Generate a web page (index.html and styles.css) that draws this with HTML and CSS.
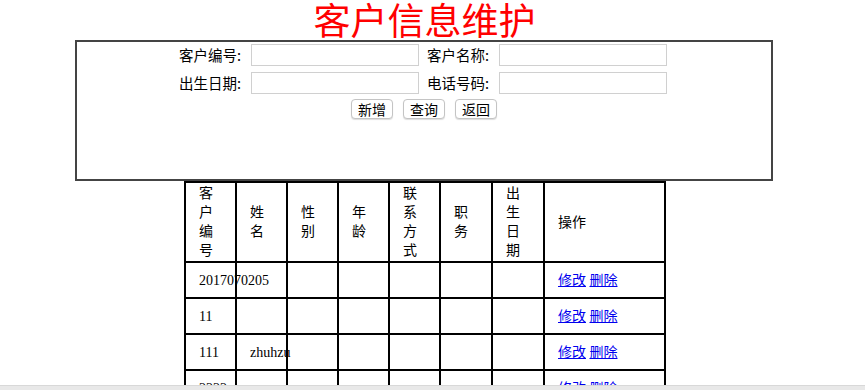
FILE: index.html
```html
<!DOCTYPE html>
<html lang="zh-CN">

<head>
    <meta charset="UTF-8">
    <title>客户信息维护</title>
    <link rel="stylesheet" href="styles.css">
</head>

<body>
    <div class="page">
        <h1 class="title">客户信息维护</h1>
        <div class="search">
            <div class="form">
                <label class="lab">客户编号:</label>
                <input class="txt" type="text">
                <label class="lab lab2">客户名称:</label>
                <input class="txt" type="text">
                <label class="lab">出生日期:</label>
                <input class="txt" type="text">
                <label class="lab lab2">电话号码:</label>
                <input class="txt" type="text">
            </div>
            <div class="btns">
                <button class="btn">新增</button>
                <button class="btn">查询</button>
                <button class="btn">返回</button>
            </div>
        </div>
        <table class="list">
            <colgroup>
                <col class="c1"><col class="c1"><col class="c1"><col class="c1"><col class="c1">
                <col class="c2"><col class="c2"><col class="c3">
            </colgroup>
            <tr class="head">
                <td>客户编号</td>
                <td>姓名</td>
                <td>性别</td>
                <td>年龄</td>
                <td>联系方式</td>
                <td>职务</td>
                <td>出生日期</td>
                <td>操作</td>
            </tr>
            <tr>
                <td>2017070205</td>
                <td></td>
                <td></td><td></td><td></td><td></td><td></td>
                <td><a href="#">修改</a> <a href="#">删除</a></td>
            </tr>
            <tr>
                <td>11</td>
                <td></td>
                <td></td><td></td><td></td><td></td><td></td>
                <td><a href="#">修改</a> <a href="#">删除</a></td>
            </tr>
            <tr>
                <td>111</td>
                <td>zhuhzu</td>
                <td></td><td></td><td></td><td></td><td></td>
                <td><a href="#">修改</a> <a href="#">删除</a></td>
            </tr>
            <tr>
                <td>2222</td>
                <td></td>
                <td></td><td></td><td></td><td></td><td></td>
                <td><a href="#">修改</a> <a href="#">删除</a></td>
            </tr>
        </table>
    </div>
    <div class="hbar"></div>
</body>

</html>
```

FILE: styles.css
```css
body {
    margin: 0;
    font-family: "Liberation Serif", "Noto Sans CJK SC", serif;
    overflow: hidden;
}

.page {
    width: 849px;
}

.title {
    margin: 0;
    height: 40px;
    font-size: 37px;
    line-height: 38px;
    font-weight: normal;
    color: #f00;
    text-align: center;
    font-family: "Noto Sans CJK SC", sans-serif;
}

.search {
    width: 694px;
    height: 137px;
    margin-left: 75px;
    border: 2px solid #444;
}

.form {
    display: grid;
    grid-template-columns: 72px 168px 80px 168px;
    row-gap: 6px;
    justify-content: center;
    padding-top: 2px;
    padding-right: 2px;
}

.lab {
    font-size: 14.5px;
    line-height: 22px;
    font-family: "Noto Sans CJK SC", sans-serif;
    color: #000;
}

.lab2 {
    padding-left: 8px;
}

.txt {
    box-sizing: border-box;
    width: 168px;
    height: 22px;
    margin: 0;
    border: 1px solid #d0d0d0;
    padding: 0 3px;
}

.btns {
    display: flex;
    justify-content: center;
    gap: 10px;
    margin-top: 5px;
}

.btn {
    width: 42px;
    height: 20px;
    padding: 0;
    font-size: 14px;
    line-height: 18px;
    font-family: "Noto Sans CJK SC", sans-serif;
    color: #000;
    background: #fff;
    border: 1px solid #c4c4c4;
    border-radius: 4px;
    box-shadow: 0 1px 1px #ddd;
}

.list {
    margin-left: 184px;
    width: 482px;
    table-layout: fixed;
    border-collapse: separate;
    border-spacing: 0;
    border: 1px solid #000;
    font-size: 14px;
}

.c1 {
    width: 51px;
}

.c2 {
    width: 52px;
}

.c3 {
    width: 121px;
}

.list td {
    box-sizing: border-box;
    border: 1px solid #000;
    padding: 0 12px 0 13px;
    height: 36px;
    line-height: 19px;
    vertical-align: middle;
    word-break: keep-all;
}

.head td {
    height: 80px;
    padding-top: 1px;
    padding-bottom: 1px;
    word-break: break-all;
}

.list a {
    color: #00e;
}

.hbar {
    position: fixed;
    left: 0;
    right: 0;
    bottom: 0;
    height: 4px;
    background: #e8e8e8;
    border-top: 1px solid #d8d8d8;
}
```
